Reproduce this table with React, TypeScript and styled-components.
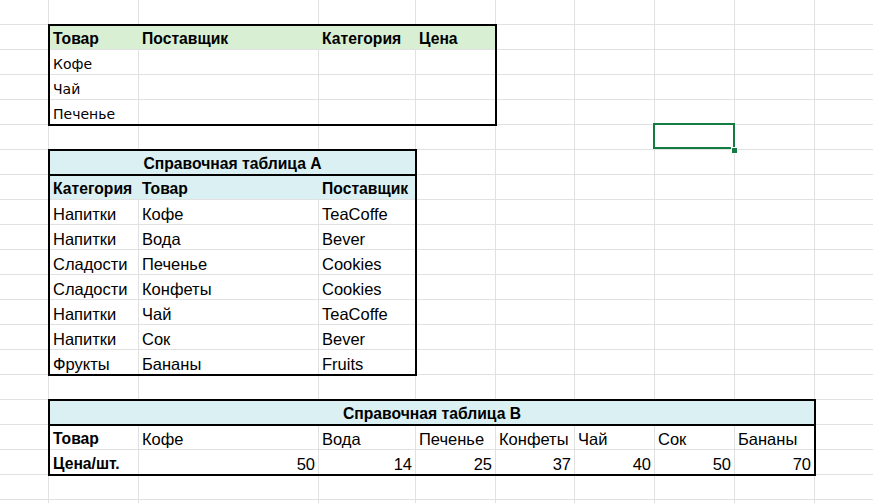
import React from "react";
import styled, { createGlobalStyle } from "styled-components";

const GRID = "#e1e1e1";
const GREEN_FILL = "#d9efd3";
const CYAN_FILL = "#daf0f2";
const SELECT = "#137c41";
const ARIAL = '"Liberation Sans", Arial, sans-serif';
const VERDANA = '"DejaVu Sans", Verdana, sans-serif';

const SHEET_COLS = [49, 90, 180, 97, 80, 79, 80, 80, 80, 80];
const SHEET_ROWS = 21;

const GlobalStyle = createGlobalStyle`
  html, body {
    margin: 0;
    padding: 0;
    background: #ffffff;
    overflow: hidden;
  }
  body {
    font-family: ${ARIAL};
    color: #000;
  }
`;

const Sheet = styled.div`
  display: grid;
  grid-template-columns: ${SHEET_COLS.map((c) => `${c}px`).join(" ")};
  grid-template-rows: repeat(${SHEET_ROWS}, 25px);
  width: max-content;
`;

const EmptyCell = styled.div`
  box-sizing: border-box;
  border-right: 1px solid ${GRID};
  border-bottom: 1px solid ${GRID};
`;

const SelectedCell = styled(EmptyCell)<{ $col: number; $row: number }>`
  grid-column: ${(p) => p.$col};
  grid-row: ${(p) => p.$row};
  position: relative;
  z-index: 2;
`;

const SelectionBox = styled.div`
  position: absolute;
  left: -2px;
  top: -2px;
  width: 82px;
  height: 26px;
  box-sizing: border-box;
  border: 2px solid ${SELECT};
`;

const FillHandle = styled.div`
  position: absolute;
  right: -3px;
  bottom: -4px;
  width: 5px;
  height: 5px;
  background: ${SELECT};
  box-shadow: 0 0 0 1px #ffffff;
`;

const Table = styled.div<{
  $col: string;
  $row: string;
  $cols: number[];
  $rows: number[];
}>`
  grid-column: ${(p) => p.$col};
  grid-row: ${(p) => p.$row};
  margin: -1px;
  position: relative;
  z-index: 1;
  box-sizing: border-box;
  border: 2px solid #000;
  background: #ffffff;
  display: grid;
  grid-template-columns: ${(p) => p.$cols.map((c) => `${c}px`).join(" ")};
  grid-template-rows: ${(p) => p.$rows.map((r) => `${r}px`).join(" ")};
`;

type Align = "left" | "right" | "center";

const Cell = styled.div<{
  $fill?: string;
  $bold?: boolean;
  $align?: Align;
  $verdana?: boolean;
  $lastCol?: boolean;
  $lastRow?: boolean;
  $thick?: boolean;
  $span?: number;
}>`
  box-sizing: border-box;
  display: flex;
  align-items: flex-end;
  justify-content: ${(p) =>
    p.$align === "right" ? "flex-end" : p.$align === "center" ? "center" : "flex-start"};
  padding: 0 3px 1px 3px;
  grid-column: span ${(p) => p.$span ?? 1};
  background: ${(p) => p.$fill ?? "transparent"};
  border-right: ${(p) => (p.$lastCol ? "none" : `1px solid ${p.$fill ?? GRID}`)};
  border-bottom: ${(p) =>
    p.$thick ? "2px solid #000" : p.$lastRow ? "none" : `1px solid ${GRID}`};
  font-family: ${(p) => (p.$verdana ? VERDANA : ARIAL)};
  font-size: ${(p) => (p.$bold ? "15.7px" : p.$verdana ? "14px" : "16.5px")};
  font-weight: ${(p) => (p.$bold ? 700 : 400)};
  line-height: 18px;
  white-space: nowrap;
  color: #000;
`;

type CellSpec = {
  text: string;
  bold?: boolean;
  align?: Align;
  fill?: string;
  verdana?: boolean;
  span?: number;
  thick?: boolean;
};

function renderRows(rows: CellSpec[][], colCount: number) {
  const out: React.ReactNode[] = [];
  rows.forEach((row, ri) => {
    let col = 0;
    row.forEach((c, ci) => {
      const span = c.span ?? 1;
      col += span;
      out.push(
        <Cell
          key={`${ri}-${ci}`}
          $fill={c.fill}
          $bold={c.bold}
          $align={c.align}
          $verdana={c.verdana}
          $span={span}
          $thick={c.thick}
          $lastCol={col === colCount}
          $lastRow={ri === rows.length - 1}
        >
          {c.text}
        </Cell>
      );
    });
  });
  return out;
}

const table1: CellSpec[][] = [
  ["Товар", "Поставщик", "Категория", "Цена"].map((t) => ({
    text: t,
    bold: true,
    fill: GREEN_FILL,
  })),
  ...["Кофе", "Чай", "Печенье"].map((t) => [
    { text: t, verdana: true },
    { text: "" },
    { text: "" },
    { text: "" },
  ]),
];

const tableARows: [string, string, string][] = [
  ["Напитки", "Кофе", "TeaCoffe"],
  ["Напитки", "Вода", "Bever"],
  ["Сладости", "Печенье", "Cookies"],
  ["Сладости", "Конфеты", "Cookies"],
  ["Напитки", "Чай", "TeaCoffe"],
  ["Напитки", "Сок", "Bever"],
  ["Фрукты", "Бананы", "Fruits"],
];

const tableA: CellSpec[][] = [
  [{ text: "Справочная таблица A", bold: true, fill: CYAN_FILL, align: "center", span: 3, thick: true }],
  ["Категория", "Товар", "Поставщик"].map((t) => ({ text: t, bold: true, fill: CYAN_FILL })),
  ...tableARows.map((r) => r.map((t) => ({ text: t }))),
];

const products = ["Кофе", "Вода", "Печенье", "Конфеты", "Чай", "Сок", "Бананы"];
const prices = [50, 14, 25, 37, 40, 50, 70];

const tableB: CellSpec[][] = [
  [{ text: "Справочная таблица B", bold: true, fill: CYAN_FILL, align: "center", span: 8, thick: true }],
  [{ text: "Товар", bold: true }, ...products.map((t) => ({ text: t }))],
  [{ text: "Цена/шт.", bold: true }, ...prices.map((n) => ({ text: String(n), align: "right" as Align }))],
];

const OCCUPIED = 16 + 27 + 24 + 1;
const FILLER_COUNT = SHEET_COLS.length * SHEET_ROWS - OCCUPIED;

export default function App() {
  return (
    <>
      <GlobalStyle />
      <Sheet>
        <Table $col="2 / 6" $row="2 / 6" $cols={[89, 180, 97, 79]} $rows={[24, 25, 25, 24]}>
          {renderRows(table1, 4)}
        </Table>
        <Table
          $col="2 / 5"
          $row="7 / 16"
          $cols={[89, 180, 96]}
          $rows={[25, 24, 25, 25, 25, 25, 25, 25, 24]}
        >
          {renderRows(tableA, 3)}
        </Table>
        <Table
          $col="2 / 10"
          $row="17 / 20"
          $cols={[89, 180, 97, 80, 79, 80, 80, 79]}
          $rows={[25, 24, 24]}
        >
          {renderRows(tableB, 8)}
        </Table>
        <SelectedCell $col={8} $row={6}>
          <SelectionBox />
          <FillHandle />
        </SelectedCell>
        {Array.from({ length: FILLER_COUNT }, (_, i) => (
          <EmptyCell key={i} />
        ))}
      </Sheet>
    </>
  );
}
